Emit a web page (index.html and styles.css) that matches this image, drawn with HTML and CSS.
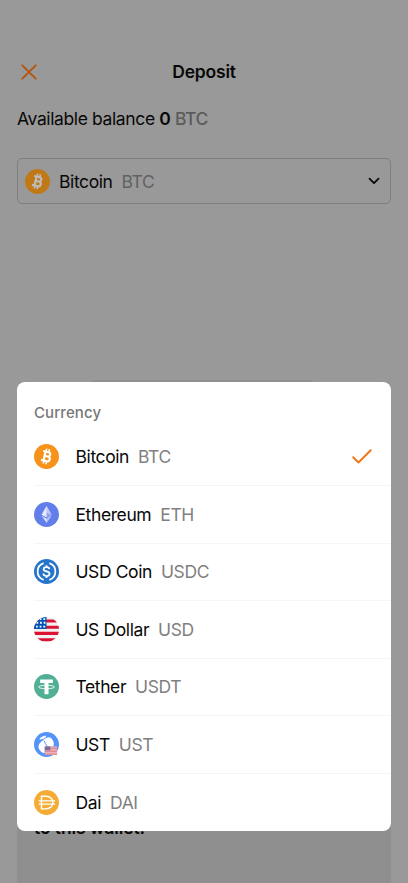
FILE: index.html
```html
<!DOCTYPE html>
<html lang="en">
<head>
<meta charset="utf-8">
<title>Deposit</title>
<link rel="stylesheet" href="styles.css">
</head>
<body>
<svg class="defs" aria-hidden="true">
  <symbol id="btc" viewBox="0 0 26 26">
    <circle cx="13" cy="13" r="13" fill="currentColor"/>
    <g transform="rotate(13 13 13)" fill="none" stroke="var(--mark, #fff)">
      <path d="M10.900 8.200v9.700M8.400 8.200h5.700a2.200 2.200 0 0 1 0 4.500h-3M10.700 12.700h3.700a2.500 2.500 0 0 1 0 5H8.200" stroke-width="2.300"/>
      <path d="M11.400 5v3M14.300 5v3M11.400 18v3M14.300 18v3" stroke-width="1.700"/>
    </g>
  </symbol>
</svg>
<main class="page">
  <header class="bar">
    <svg class="close" viewBox="0 0 16 16"><path d="M1.300 1.300l13.400 13.400M14.700 1.300L1.300 14.700"/></svg>
    <h1>Deposit</h1>
  </header>
  <p class="balance">Available balance <b>0</b> <span>BTC</span></p>
  <div class="select">
    <svg class="coin dim"><use href="#btc"/></svg>
    <span class="name">Bitcoin</span><span class="code">BTC</span>
    <svg class="chevron" viewBox="0 0 12 8"><path d="M1.500 1.700L6 6.100l4.500-4.400"/></svg>
  </div>
  <div class="qr"></div>
  <div class="note">to this wallet.</div>
</main>
<section class="sheet">
  <h2>Currency</h2>
  <ul>
    <li>
      <svg class="coin orange"><use href="#btc"/></svg>
      <div class="label"><span class="name">Bitcoin</span><span class="code">BTC</span>
      <svg class="check" viewBox="0 0 20 15"><path d="M1.200 8.300l5.300 5.200L18.700 1.200"/></svg></div>
    </li>
    <li>
      <svg class="coin" viewBox="0 0 26 26"><circle cx="13" cy="13" r="13" fill="#627eea"/><path d="M13 4.200L7.800 13.200l5.200 3 5.200-3z" fill="#e4e9fc"/><path d="M13 4.200v6.700l5.200 2.300z" fill="#bdc9f7"/><path d="M13 10.900l5.200 2.300-5.200 3z" fill="#8fa3f0"/><path d="M7.800 14.300l5.200 7.400 5.200-7.400-5.200 3z" fill="#dce2fb"/><path d="M13 17.300v4.400l5.200-7.400z" fill="#b2c0f6"/></svg>
      <div class="label"><span class="name">Ethereum</span><span class="code">ETH</span></div>
    </li>
    <li>
      <svg class="coin" viewBox="0 0 26 26"><circle cx="13" cy="13" r="13" fill="#2775ca"/><g fill="none" stroke="#fff" stroke-width="1.800"><path d="M10 4.300a9.200 9.200 0 0 0 0 17.400M16 4.300a9.200 9.200 0 0 1 0 17.400"/><path d="M16 10.500c-.1-1.500-1.300-2.100-3-2.100-1.800 0-3 .8-3 2.200 0 3.200 6.200 1.500 6.200 4.800 0 1.500-1.300 2.300-3.200 2.300s-3.200-.8-3.200-2.500M13 6.500v2M13 17.500v2.200"/></g></svg>
      <div class="label"><span class="name">USD Coin</span><span class="code">USDC</span></div>
    </li>
    <li>
      <svg class="coin" viewBox="0 0 26 26"><clipPath id="round"><circle cx="13" cy="13" r="13"/></clipPath><g clip-path="url(#round)"><path fill="#f0f0f2" d="M0 0h26v26H0z"/><path d="M0 4.200h26M0 10.700h26M0 17h26M0 23.600h26" stroke="#dc1233" stroke-width="3.200"/><path d="M0 0h13v12.500H0z" fill="#0052b4"/><path d="M6.800 1.200v2M10.700 1.200v2M3.500 5v2M7.200 5v2M11 5v2M3 9v2M6.800 9v2M10.700 9v2" stroke="#fff" stroke-width="1.900"/></g></svg>
      <div class="label"><span class="name">US Dollar</span><span class="code">USD</span></div>
    </li>
    <li>
      <svg class="coin" viewBox="0 0 26 26"><circle cx="13" cy="13" r="13" fill="#50af95"/><path d="M6.400 5.600h13.200v3.800h-4.500v11.600h-4.200V9.400H6.400z" fill="#fff"/><ellipse cx="13" cy="13.500" rx="8.300" ry="1.800" fill="none" stroke="#fff" stroke-width=".9"/></svg>
      <div class="label"><span class="name">Tether</span><span class="code">USDT</span></div>
    </li>
    <li>
      <svg class="coin" viewBox="0 0 26 26"><circle cx="13" cy="13" r="13" fill="#5493f7"/><path d="M9.500 8.500c2.500-2.500 6-4.300 8.500-2 2.500 2.500 3.500 5.500 2 8.500H11v7.200c-4-1.200-6.500-4-6.300-7.700.2-2.500 2.300-4 4.800-6z" fill="#fff"/><path d="M5.500 7.500C7 5 10 3.700 12.800 4c-1 2.500-4 4.500-7.300 3.500z" fill="#fff"/><path d="M10.500 9c1.500 4 3 6.500 7 8" fill="none" stroke="#5493f7" stroke-width="1"/><path d="M11.500 15h12.500v9H11.500z" fill="#eeb0b8"/><path d="M11.500 17h12.500M11.500 20h12.500M11.500 23h12.500" stroke="#dc8994" stroke-width="1.400"/><path d="M11.500 15h5.500v4h-5.500z" fill="#806b97"/></svg>
      <div class="label"><span class="name">UST</span><span class="code">UST</span></div>
    </li>
    <li>
      <svg class="coin" viewBox="0 0 26 26"><circle cx="13" cy="13" r="13" fill="#f5ac37"/><path d="M7.800 6.400h4.700c9.600 0 9.600 13.200 0 13.200H7.800zM5 11.300h17M5 14.700h17" fill="none" stroke="#fff" stroke-width="1.500"/></svg>
      <div class="label"><span class="name">Dai</span><span class="code">DAI</span></div>
    </li>
  </ul>
</section>
</body>
</html>
```
FILE: styles.css
```css
* { box-sizing: border-box; margin: 0; padding: 0; }
body { height: 883px; overflow: hidden; background: #999; color: #080808; font: 17.5px/24px Inter, sans-serif; letter-spacing: -.4px; }
.defs { position: absolute; width: 0; height: 0; }
.page { height: 883px; padding: 60px 17px 0; display: flex; flex-direction: column; }
.bar { display: grid; grid-template-columns: 24px 1fr 24px; align-items: center; height: 24px; }
.bar h1 { font-size: 17.5px; font-weight: 600; text-align: center; letter-spacing: -.2px; }
.close { width: 16px; height: 16px; margin-left: 4px; fill: none; stroke: #b5550a; stroke-width: 1.9; stroke-linecap: round; }
.balance { margin-top: 23px; white-space: pre; letter-spacing: -.38px; }
.balance b { font-weight: 600; }
.balance span { color: #5b5b5b; font-weight: 500; }
.select { margin-top: 27px; height: 46px; border: 1px solid #7f7f7f; border-radius: 5px; padding: 0 10px 0 7px; display: flex; align-items: center; }
.select .name { margin-left: 9px; }
.coin { width: 25px; height: 25px; flex: none; display: block; }
.orange { color: #f7931a; }
.dim { color: #c17817; --mark: #bdbdbd; }
.code { color: #808080; margin-left: 9px; }
.select .name, .select .code { padding-top: 1px; }
.select .code { color: #616161; }
.chevron { width: 12px; height: 8px; margin-left: auto; fill: none; stroke: #0a0a0a; stroke-width: 1.8; stroke-linecap: round; stroke-linejoin: round; }
.qr { margin: 176px 75px 0 71px; height: 222px; border-radius: 8px; background: #8f8f8f; }
.note { margin-top: 100px; flex: 1; padding: 114px 17px 0; background: #8f8f8f; font-weight: 600; letter-spacing: -.1px; }
.sheet { position: absolute; left: 17px; top: 382px; width: 374px; height: 448.5px; border-radius: 8px; background: #fff; overflow: hidden; }
.sheet h2 { height: 46.5px; padding: 19px 17px 0; color: #777; font-size: 15px; font-weight: 450; letter-spacing: .1px; }
.sheet ul { list-style: none; }
.sheet li { display: flex; align-items: center; height: 57.5px; margin-left: 17px; border-bottom: 1px solid #f5f5f5; }
.sheet li:last-child { border-bottom: 0; }
.label { display: flex; flex: 1; align-items: center; margin-left: 16.5px; }
.sheet .name, .sheet .code { padding-top: 1px; }
.check { width: 20px; height: 15px; margin: 0 19px 0 auto; fill: none; stroke: #f57818; stroke-width: 2; stroke-linecap: round; stroke-linejoin: round; }
```
